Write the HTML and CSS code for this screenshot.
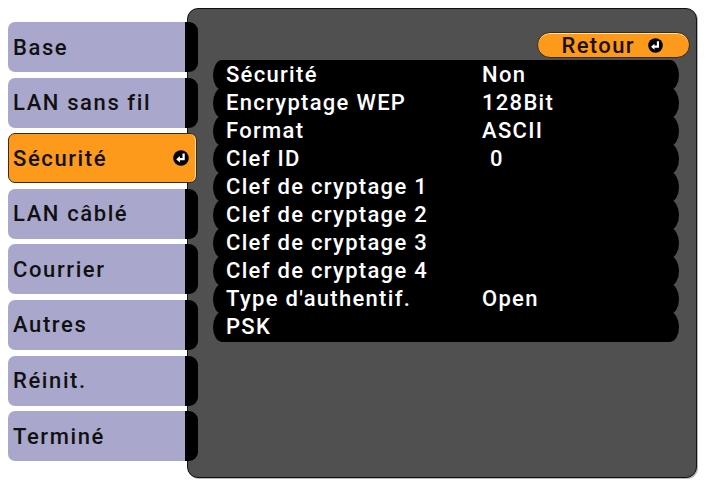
FILE: index.html
```html
<!DOCTYPE html>
<html lang="fr">
<head>
<meta charset="utf-8">
<title>Sécurité</title>
<link rel="stylesheet" href="styles.css">
</head>
<body>
<div class="screen">
  <nav class="tabs">
    <div class="tab"><span class="tab-label">Base</span><span class="cap"></span></div>
    <div class="tab"><span class="tab-label">LAN sans fil</span><span class="cap"></span></div>
    <div class="tab tab-active"><span class="tab-label">Sécurité</span>
      <svg class="enter" viewBox="0 0 16 16" width="16" height="16"><circle cx="8" cy="8" r="7.8" fill="#000"/><path d="M10.6 3.4 V9.2 H6.2" fill="none" stroke="#fff" stroke-width="2.3"/><path d="M3.2 9.2 L6.9 6 L6.9 12.4 Z" fill="#fff"/></svg>
    </div>
    <div class="tab"><span class="tab-label">LAN câblé</span><span class="cap"></span></div>
    <div class="tab"><span class="tab-label">Courrier</span><span class="cap"></span></div>
    <div class="tab"><span class="tab-label">Autres</span><span class="cap"></span></div>
    <div class="tab"><span class="tab-label">Réinit.</span><span class="cap"></span></div>
    <div class="tab"><span class="tab-label">Terminé</span><span class="cap"></span></div>
  </nav>
  <main class="panel">
    <div class="back">Retour
      <svg class="enter" viewBox="0 0 16 16" width="15" height="15"><circle cx="8" cy="8" r="7.8" fill="#000"/><path d="M10.6 3.4 V9.2 H6.2" fill="none" stroke="#fff" stroke-width="2.3"/><path d="M3.2 9.2 L6.9 6 L6.9 12.4 Z" fill="#fff"/></svg>
    </div>
    <div class="rows">
      <div class="row"><span class="label">Sécurité</span><span class="value">Non</span></div>
      <div class="row"><span class="label">Encryptage WEP</span><span class="value">128Bit</span></div>
      <div class="row"><span class="label">Format</span><span class="value">ASCII</span></div>
      <div class="row"><span class="label">Clef ID</span><span class="value value-indent">0</span></div>
      <div class="row"><span class="label">Clef de cryptage 1</span><span class="value"></span></div>
      <div class="row"><span class="label">Clef de cryptage 2</span><span class="value"></span></div>
      <div class="row"><span class="label">Clef de cryptage 3</span><span class="value"></span></div>
      <div class="row"><span class="label">Clef de cryptage 4</span><span class="value"></span></div>
      <div class="row"><span class="label">Type d'authentif.</span><span class="value">Open</span></div>
      <div class="row"><span class="label">PSK</span><span class="value"></span></div>
    </div>
  </main>
</div>
</body>
</html>
```

FILE: styles.css
```css
html, body {
  margin: 0;
  padding: 0;
  background: #ffffff;
}

body {
  font-family: Roboto, "Liberation Sans", Arial, sans-serif;
  font-weight: 500;
  width: 717px;
  height: 481px;
  overflow: hidden;
}

.screen {
  display: flex;
  align-items: flex-start;
  padding: 8px 0 0 8px;
}

.tabs {
  position: relative;
  z-index: 1;
  display: flex;
  flex-direction: column;
  gap: 5.6px;
  margin-top: 14px;
  width: 190px;
}

.tab {
  display: flex;
  height: 50px;
  align-items: stretch;
}

.tab-label {
  flex: 0 0 177px;
  box-sizing: border-box;
  background: #a9a8cc;
  border-radius: 7px 0 0 7px;
  display: flex;
  align-items: center;
  padding-left: 5px;
  font-size: 22px;
  letter-spacing: 1.6px;
  color: #111111;
}

.cap {
  flex: 0 0 13px;
  background: #000000;
  border-radius: 0 9px 9px 0;
}

.tab-active {
  width: 189px;
  box-sizing: border-box;
  background: #fd9a1c;
  border: 1px solid #3a2a10;
  border-radius: 7px;
  box-shadow: inset -1px 0 0 #ffe0a8;
  align-items: center;
  justify-content: space-between;
  padding-right: 7px;
}

.tab-active .tab-label {
  background: transparent;
  flex: 0 0 auto;
  padding-left: 4px;
}

.enter {
  display: block;
}

.panel {
  margin-left: -11px;
  width: 510px;
  height: 470px;
  box-sizing: border-box;
  background: #505050;
  border: 1px solid #111111;
  border-radius: 11px;
  box-shadow: 1px 1px 0 #b8b8b8;
  display: flex;
  flex-direction: column;
  padding: 23px 6px 0 25px;
}

.back {
  align-self: flex-end;
  width: 153px;
  height: 26px;
  box-sizing: border-box;
  background: #fd9a1c;
  border: 1px solid #3a2a10;
  border-radius: 13px;
  box-shadow: inset 0 1px 0 #ffe0a8;
  display: flex;
  align-items: center;
  justify-content: flex-end;
  gap: 13px;
  padding-right: 26px;
  font-size: 22px;
  letter-spacing: 1.4px;
  color: #1a1000;
}

.rows {
  margin-top: 2px;
  margin-right: 11px;
  display: flex;
  flex-direction: column;
}

.row {
  height: 30px;
  margin-top: -2px;
  background: #000000;
  border-radius: 9px / 15px;
  display: grid;
  grid-template-columns: 256px 1fr;
  align-items: center;
  padding-left: 13px;
  color: #ffffff;
  font-size: 22px;
  letter-spacing: 1.3px;
  line-height: 30px;
}

.row:first-child {
  margin-top: 0;
}

.value-indent {
  padding-left: 8px;
}
```
